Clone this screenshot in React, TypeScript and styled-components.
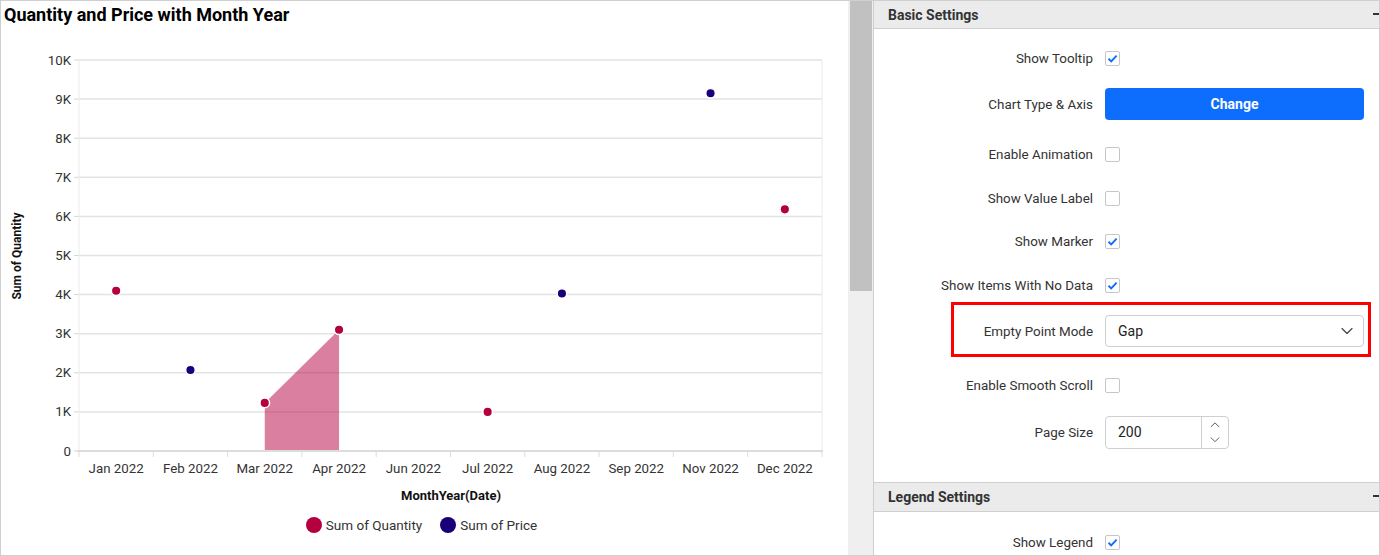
import React from 'react'
import styled, {createGlobalStyle} from 'styled-components'
import {ChevronDown, ChevronUp} from 'lucide-react'

const GlobalStyle = createGlobalStyle`
  html, body {
    margin: 0;
    padding: 0;
    background: #fff;
  }
  body {
    font-family: Roboto, 'Liberation Sans', Arial, sans-serif;
    color: #333;
  }
  * {
    box-sizing: border-box;
  }
`

const RED = '#b5003f'
const BLUE = '#1a0078'

const months = [
  'Jan 2022',
  'Feb 2022',
  'Mar 2022',
  'Apr 2022',
  'Jun 2022',
  'Jul 2022',
  'Aug 2022',
  'Sep 2022',
  'Nov 2022',
  'Dec 2022',
]

// value per category, null means no data
const quantity: (number | null)[] = [4100, null, 1230, 3100, null, 1000, null, null, null, 6180]
const price: (number | null)[] = [null, 2070, null, null, null, null, 4030, null, 9150, null]

const PLOT_LEFT = 79
const PLOT_RIGHT = 822
const PLOT_BOTTOM = 450
const STEP_Y = 39.1
const BAND = (PLOT_RIGHT - PLOT_LEFT) / months.length

const yOf = (v: number) => PLOT_BOTTOM - (v / 1000) * STEP_Y
const xOf = (i: number) => PLOT_LEFT + BAND * i + BAND / 2

type Setting =
  | {label: string; kind: 'check'; checked: boolean; mt: number}
  | {label: string; kind: 'button'; mt: number}
  | {label: string; kind: 'select'; value: string; mt: number; marked?: boolean}
  | {label: string; kind: 'number'; value: string; mt: number}

const basicSettings: Setting[] = [
  {label: 'Show Tooltip', kind: 'check', checked: true, mt: 13},
  {label: 'Chart Type & Axis', kind: 'button', mt: 14},
  {label: 'Enable Animation', kind: 'check', checked: false, mt: 18},
  {label: 'Show Value Label', kind: 'check', checked: false, mt: 12},
  {label: 'Show Marker', kind: 'check', checked: true, mt: 11},
  {label: 'Show Items With No Data', kind: 'check', checked: true, mt: 12},
  {label: 'Empty Point Mode', kind: 'select', value: 'Gap', mt: 14, marked: true},
  {label: 'Enable Smooth Scroll', kind: 'check', checked: false, mt: 22},
  {label: 'Page Size', kind: 'number', value: '200', mt: 15},
]

const Chart = () => {
  // area segment between consecutive quantity points
  const areas: string[] = []
  quantity.forEach((v, i) => {
    const next = quantity[i + 1]
    if (v != null && next != null && i + 1 < quantity.length) {
      areas.push(
        `${xOf(i)},${PLOT_BOTTOM} ${xOf(i)},${yOf(v)} ${xOf(i + 1)},${yOf(next)} ${xOf(i + 1)},${PLOT_BOTTOM}`,
      )
    }
  })

  return (
    <svg width={846} height={478} viewBox="1 30 846 478">
      {Array.from({length: 11}).map((_, k) => {
        const y = PLOT_BOTTOM - k * STEP_Y
        return (
          <g key={k}>
            {k > 0 && <line x1={PLOT_LEFT} x2={PLOT_RIGHT} y1={y} y2={y} stroke="#e3e3e3" strokeWidth={1.5} />}
            <line x1={74} x2={PLOT_LEFT} y1={y} y2={y} stroke="#d6d6d6" strokeWidth={1} />
            <text x={71} y={y + 4.5} textAnchor="end" fontSize={13.3} fill="#333">
              {k === 0 ? '0' : `${k}K`}
            </text>
          </g>
        )
      })}
      <line x1={PLOT_LEFT} x2={PLOT_LEFT} y1={59} y2={PLOT_BOTTOM} stroke="#ebebeb" strokeWidth={1} />
      <line x1={PLOT_RIGHT} x2={PLOT_RIGHT} y1={59} y2={PLOT_BOTTOM} stroke="#ebebeb" strokeWidth={1} />
      {areas.map((pts) => (
        <polygon key={pts} points={pts} fill={RED} fillOpacity={0.5} />
      ))}
      <line x1={PLOT_LEFT - 2} x2={PLOT_RIGHT + 1} y1={PLOT_BOTTOM} y2={PLOT_BOTTOM} stroke="#dcdcdc" strokeWidth={2} />
      {Array.from({length: months.length + 1}).map((_, i) => {
        const x = PLOT_LEFT + BAND * i
        return <line key={i} x1={x} x2={x} y1={PLOT_BOTTOM} y2={PLOT_BOTTOM + 6} stroke="#dcdcdc" strokeWidth={1} />
      })}
      {months.map((m, i) => (
        <text key={m} x={xOf(i)} y={471.5} textAnchor="middle" fontSize={13.3} fill="#333">
          {m}
        </text>
      ))}
      {quantity.map((v, i) =>
        v == null ? null : (
          <circle key={`q${i}`} cx={xOf(i)} cy={yOf(v)} r={4.8} fill={RED} stroke="#fff" strokeWidth={1.5} />
        ),
      )}
      {price.map((v, i) =>
        v == null ? null : (
          <circle key={`p${i}`} cx={xOf(i)} cy={yOf(v)} r={4.8} fill={BLUE} stroke="#fff" strokeWidth={1.5} />
        ),
      )}
      <text
        x={0}
        y={0}
        transform="translate(21 255) rotate(-90)"
        textAnchor="middle"
        fontSize={12}
        fontWeight={700}
        fill="#111"
      >
        Sum of Quantity
      </text>
      <text x={451} y={498.5} textAnchor="middle" fontSize={13} fontWeight={700} fill="#111">
        MonthYear(Date)
      </text>
    </svg>
  )
}

const Check = ({checked}: {checked: boolean}) => (
  <CheckBox>
    {checked && (
      <svg width={11} height={11} viewBox="0 0 11 11">
        <polyline points="1.5,5.8 4.2,8.4 9.6,2.6" fill="none" stroke="#0d6efd" strokeWidth={1.9} />
      </svg>
    )}
  </CheckBox>
)

const renderControl = (s: Setting) => {
  switch (s.kind) {
    case 'check':
      return <Check checked={s.checked} />
    case 'button':
      return <ChangeButton>Change</ChangeButton>
    case 'select':
      return (
        <Select>
          <span>{s.value}</span>
          <ChevronDown size={20} strokeWidth={1.4} color="#444" />
        </Select>
      )
    case 'number':
      return (
        <NumberBox>
          <NumberValue>{s.value}</NumberValue>
          <Spinner>
            <ChevronUp size={16} strokeWidth={1.5} color="#555" />
            <ChevronDown size={16} strokeWidth={1.5} color="#555" />
          </Spinner>
        </NumberBox>
      )
  }
}

const App = () => {
  return (
    <>
      <GlobalStyle />
      <Page>
        <ChartPanel>
          <ChartTitle>Quantity and Price with Month Year</ChartTitle>
          <Chart />
          <Legend>
            <LegendItem>
              <LegendDot $color={RED} />
              Sum of Quantity
            </LegendItem>
            <LegendItem>
              <LegendDot $color={BLUE} />
              Sum of Price
            </LegendItem>
          </Legend>
        </ChartPanel>
        <ScrollTrack>
          <ScrollThumb />
        </ScrollTrack>
        <SettingsPanel>
          <SectionHeader>
            Basic Settings
            <Collapse />
          </SectionHeader>
          <SectionBody>
            {basicSettings.map((s) => (
              <Row key={s.label} $mt={s.mt}>
                <Label>{s.label}</Label>
                {renderControl(s)}
                {s.kind === 'select' && s.marked && <Highlight />}
              </Row>
            ))}
          </SectionBody>
          <SectionHeader $top>
            Legend Settings
            <Collapse />
          </SectionHeader>
          <SectionBody>
            <Row $mt={14}>
              <Label>Show Legend</Label>
              <Check checked />
            </Row>
          </SectionBody>
        </SettingsPanel>
      </Page>
    </>
  )
}

export default App

const Page = styled.div`
  display: flex;
  width: 1380px;
  height: 556px;
  border: 1px solid #cfcfcf;
  overflow: hidden;
`
const ChartPanel = styled.div`
  display: flex;
  flex-direction: column;
  width: 847px;
  flex-shrink: 0;
`
const ChartTitle = styled.div`
  height: 30px;
  padding: 3px 0 0 3px;
  font-size: 18px;
  font-weight: 700;
  color: #000;
`
const Legend = styled.div`
  height: 32px;
  display: flex;
  align-items: center;
  justify-content: center;
  gap: 18px;
  font-size: 13.5px;
  color: #333;
  padding-right: 6px;
  padding-bottom: 1px;
`
const LegendItem = styled.div`
  display: flex;
  align-items: center;
  gap: 4px;
`
const LegendDot = styled.span<{$color: string}>`
  width: 16px;
  height: 16px;
  border-radius: 50%;
  background: ${(p) => p.$color};
`
const ScrollTrack = styled.div`
  width: 25px;
  flex-shrink: 0;
  background: #efefef;
  padding: 0 1px 0 2px;
`
const ScrollThumb = styled.div`
  height: 290px;
  background: #c1c1c1;
`
const SettingsPanel = styled.div`
  flex: 1;
  border-left: 1px solid #cfcfcf;
  overflow: hidden;
  font-size: 13px;
  color: #333;
`
const SectionHeader = styled.div<{$top?: boolean}>`
  position: relative;
  height: ${(p) => (p.$top ? '30px' : '28px')};
  display: flex;
  align-items: center;
  padding-left: 14px;
  background: #ebebeb;
  border-top: ${(p) => (p.$top ? '1px solid #cfcfcf' : 'none')};
  border-bottom: 1px solid #cfcfcf;
  font-size: 14px;
  font-weight: 700;
  color: #333;
`
const Collapse = styled.span`
  position: absolute;
  right: 0;
  top: 12px;
  width: 6px;
  height: 1.5px;
  background: #333;
`
const SectionBody = styled.div`
  display: flex;
  flex-direction: column;
  padding-bottom: 34px;
`
const Row = styled.div<{$mt: number}>`
  position: relative;
  display: flex;
  align-items: center;
  height: 32px;
  margin-top: ${(p) => p.$mt}px;
  padding-right: 15px;
`
const Label = styled.div`
  width: 231px;
  flex-shrink: 0;
  text-align: right;
  padding-right: 12px;
  font-size: 13.4px;
  color: #333;
`
const CheckBox = styled.span`
  width: 15px;
  height: 15px;
  border: 1px solid #c6c6c6;
  border-radius: 2px;
  background: #fff;
  display: flex;
  align-items: center;
  justify-content: center;
`
const ChangeButton = styled.button`
  flex: 1;
  height: 32px;
  border: none;
  border-radius: 4px;
  background: #0d6efd;
  color: #fff;
  font-family: inherit;
  font-size: 14px;
  font-weight: 700;
`
const Select = styled.div`
  flex: 1;
  height: 32px;
  border: 1px solid #cfcfcf;
  border-radius: 4px;
  display: flex;
  align-items: center;
  justify-content: space-between;
  padding: 0 6px 0 12px;
  font-size: 14px;
  color: #222;
`
const Highlight = styled.div`
  position: absolute;
  left: 77px;
  right: 8px;
  top: -13px;
  bottom: -10px;
  border: 3px solid #ff0000;
  pointer-events: none;
`
const NumberBox = styled.div`
  width: 124px;
  height: 33px;
  border: 1px solid #cfcfcf;
  border-radius: 4px;
  display: flex;
`
const NumberValue = styled.div`
  flex: 1;
  display: flex;
  align-items: center;
  padding-left: 12px;
  font-size: 14px;
  color: #222;
  border-right: 1px solid #cfcfcf;
`
const Spinner = styled.div`
  width: 26px;
  display: flex;
  flex-direction: column;
  align-items: center;
  justify-content: center;
`
